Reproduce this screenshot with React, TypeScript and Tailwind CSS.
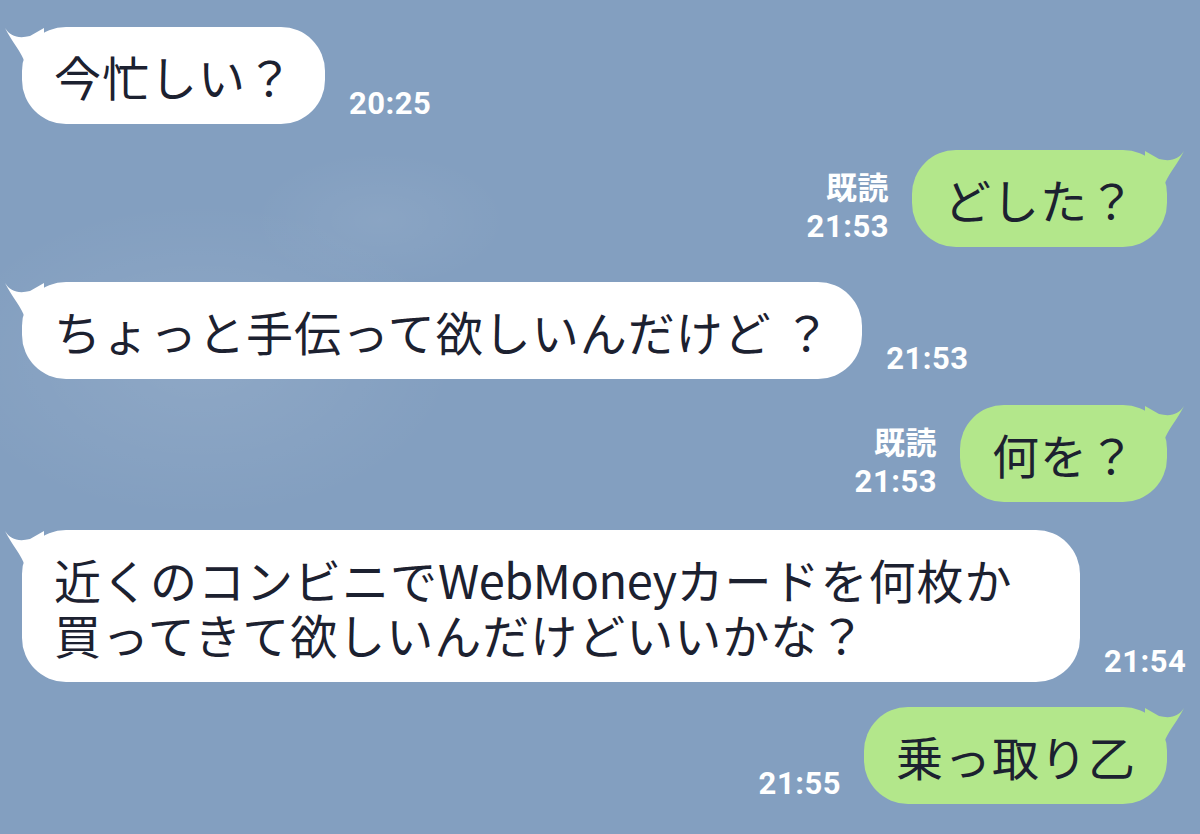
import type { ReactNode } from 'react';

interface Message {
  id: number;
  side: 'left' | 'right';
  lines: ReactNode[];
  time: string;
  read?: boolean;
  gapClass: string;
  widthClass?: string;
}

const messages: Message[] = [
  { id: 1, side: 'left', lines: ['今忙しい？'], time: '20:25', gapClass: 'mt-[27px]' },
  { id: 2, side: 'right', lines: ['どした？'], time: '21:53', read: true, gapClass: 'mt-[26px]' },
  { id: 3, side: 'left', lines: ['ちょっと手伝って欲しいんだけど ？'], time: '21:53', gapClass: 'mt-[35px]' },
  { id: 4, side: 'right', lines: ['何を？'], time: '21:53', read: true, gapClass: 'mt-[26px]' },
  {
    id: 5,
    side: 'left',
    lines: [
      <>
        近くのコンビニで<span className="tracking-[-0.5px]">WebMoney</span>カードを何枚か
      </>,
      '買ってきて欲しいんだけどいいかな？',
    ],
    time: '21:54',
    gapClass: 'mt-[28px]',
    widthClass: 'w-[1058px]',
  },
  { id: 6, side: 'right', lines: ['乗っ取り乙'], time: '21:55', gapClass: 'mt-[25px]' },
];

// Little horn that sticks out of the top corner of a bubble
function Tail({ side }: { side: 'left' | 'right' }) {
  const fill = side === 'left' ? '#ffffff' : '#b3e78b';
  return (
    <svg
      width="44"
      height="44"
      viewBox="0 0 44 44"
      className={
        side === 'left'
          ? 'absolute left-[-18px] top-[-2px]'
          : 'absolute right-[-18px] top-[-2px] scale-x-[-1]'
      }
    >
      <path d="M1 3 C 6 11, 14 14, 26 11 L 40 3 L 40 40 L 22 40 C 17 26, 8 17, 1 3 Z" fill={fill} />
    </svg>
  );
}

function Bubble({ side, widthClass, children }: { side: 'left' | 'right'; widthClass?: string; children: ReactNode }) {
  const color = side === 'left' ? 'bg-white' : 'bg-[#b3e78b]';
  return (
    <div
      className={`relative ${color} ${widthClass ?? ''} rounded-[44px] pl-[32px] pr-[31px] py-[21px] text-[47px] leading-[55px] tracking-[1px] text-[#1c2130] whitespace-nowrap`}
    >
      <Tail side={side} />
      <div className="relative">{children}</div>
    </div>
  );
}

function Meta({ time, read, align }: { time: string; read?: boolean; align: 'left' | 'right' }) {
  return (
    <div
      className={`flex flex-col ${align === 'right' ? 'items-end' : 'items-start'} mb-[1px] text-[31px] font-bold leading-[38px] tracking-[0.5px] text-white`}
      style={{ fontFamily: 'Roboto, "Noto Sans CJK JP", sans-serif' }}
    >
      {read && <span>既読</span>}
      <span>{time}</span>
    </div>
  );
}

export default function App() {
  return (
    <div
      className="relative h-[834px] w-full overflow-hidden bg-[#839fc0]"
      style={{ fontFamily: '"Noto Sans CJK JP", "Noto Sans", sans-serif' }}
    >
      {/* faint cloud patches in the wallpaper */}
      <div className="pointer-events-none absolute left-[-60px] top-[200px] h-[320px] w-[520px] rounded-full bg-[radial-gradient(ellipse_at_center,rgba(255,255,255,0.09),rgba(255,255,255,0)_70%)]" />
      <div className="pointer-events-none absolute left-[250px] top-[150px] h-[140px] w-[260px] rounded-full bg-[radial-gradient(ellipse_at_center,rgba(255,255,255,0.06),rgba(255,255,255,0)_70%)]" />

      <div className="relative flex flex-col">
        {messages.map((m) =>
          m.side === 'left' ? (
            <div key={m.id} className={`flex items-end gap-[24px] pl-[22px] ${m.gapClass}`}>
              <Bubble side="left" widthClass={m.widthClass}>
                {m.lines.map((line, i) => (
                  <div key={i}>{line}</div>
                ))}
              </Bubble>
              <Meta time={m.time} align="left" />
            </div>
          ) : (
            <div key={m.id} className={`flex items-end justify-end gap-[23px] pr-[33px] ${m.gapClass}`}>
              <Meta time={m.time} read={m.read} align="right" />
              <Bubble side="right">
                {m.lines.map((line, i) => (
                  <div key={i}>{line}</div>
                ))}
              </Bubble>
            </div>
          )
        )}
      </div>
    </div>
  );
}
